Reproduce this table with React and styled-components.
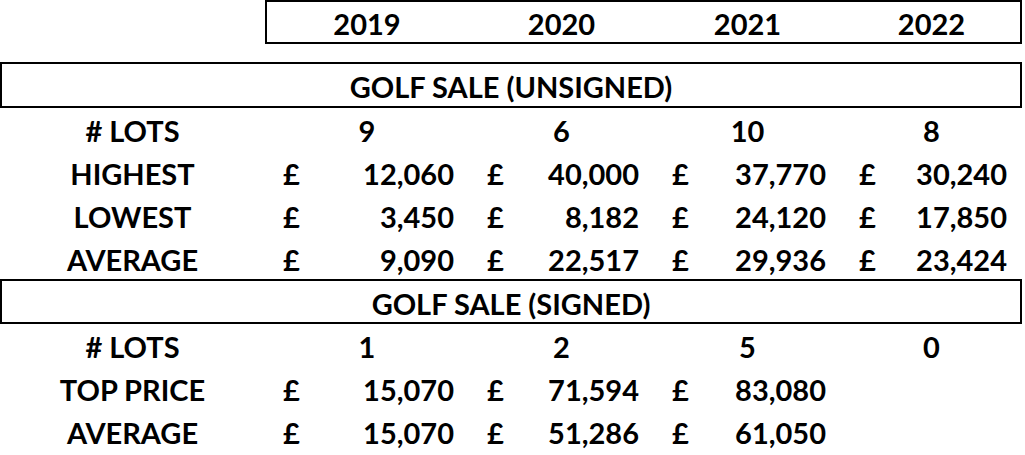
import React from 'react';
import styled, { createGlobalStyle } from 'styled-components';

const COLS = '265px 204px 185px 187px 181px';
const YEAR_COLS = '204px 185px 187px 181px';

const GlobalStyle = createGlobalStyle`
  html, body {
    margin: 0;
    padding: 0;
    background: #fff;
  }
  body {
    font-family: Lato, "Open Sans", "Liberation Sans", sans-serif;
    font-weight: 700;
    font-size: 29px;
    color: #000;
  }
`;

const Sheet = styled.div`
  width: 1022px;
  display: flex;
  flex-direction: column;
`;

const Row = styled.div`
  display: grid;
  grid-template-columns: ${COLS};
  height: ${p => p.$h || 43}px;
`;

const YearBox = styled.div`
  grid-column: 2 / 6;
  display: grid;
  grid-template-columns: ${YEAR_COLS};
  box-shadow: inset 0 0 0 2px #000;
`;

const SectionTitle = styled.div`
  height: ${p => p.$h}px;
  margin-top: ${p => p.$gap || 0}px;
  display: flex;
  align-items: center;
  justify-content: center;
  padding-top: 3px;
  box-sizing: border-box;
  box-shadow: inset 0 0 0 2px #000;
`;

const Cell = styled.div`
  display: flex;
  align-items: center;
  justify-content: center;
  padding-top: 2px;
  white-space: nowrap;
`;

const Money = styled.div`
  display: flex;
  align-items: center;
  justify-content: space-between;
  padding: 2px 15px 0 18px;
  white-space: nowrap;
`;

const years = ['2019', '2020', '2021', '2022'];

const unsigned = [
  { label: '# LOTS', counts: ['9', '6', '10', '8'] },
  { label: 'HIGHEST', money: ['12,060', '40,000', '37,770', '30,240'] },
  { label: 'LOWEST', money: ['3,450', '8,182', '24,120', '17,850'] },
  { label: 'AVERAGE', money: ['9,090', '22,517', '29,936', '23,424'], h: 42 },
];

const signed = [
  { label: '# LOTS', counts: ['1', '2', '5', '0'] },
  { label: 'TOP PRICE', money: ['15,070', '71,594', '83,080', null] },
  { label: 'AVERAGE', money: ['15,070', '51,286', '61,050', null] },
];

const DataRow = ({ row }) => (
  <Row $h={row.h}>
    <Cell>{row.label}</Cell>
    {row.counts && row.counts.map((c, i) => <Cell key={i}>{c}</Cell>)}
    {row.money && row.money.map((m, i) => (
      m ? (
        <Money key={i}>
          <span>£</span>
          <span>{m}</span>
        </Money>
      ) : <Cell key={i} />
    ))}
  </Row>
);

export default function App() {
  return (
    <>
      <GlobalStyle />
      <Sheet>
        <Row $h={44}>
          <div />
          <YearBox>
            {years.map(y => <Cell key={y}>{y}</Cell>)}
          </YearBox>
        </Row>

        <SectionTitle $h={46} $gap={18}>GOLF SALE (UNSIGNED)</SectionTitle>
        {unsigned.map(r => <DataRow key={r.label} row={r} />)}

        <SectionTitle $h={45}>GOLF SALE (SIGNED)</SectionTitle>
        {signed.map(r => <DataRow key={r.label} row={r} />)}
      </Sheet>
    </>
  );
}
